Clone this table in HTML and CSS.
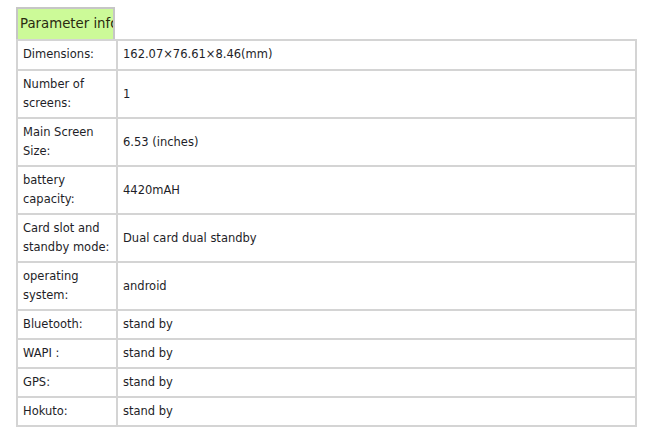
FILE: index.html
```html
<!DOCTYPE html>
<html>
<head>
<meta charset="utf-8">
<link rel="stylesheet" href="styles.css">
</head>
<body>
<div class="page">
  <div class="tab">Parameter info</div>
  <table class="params">
    <colgroup><col class="c-label"><col></colgroup>
    <tr class="first"><td>Dimensions:</td><td>162.07×76.61×8.46(mm)</td></tr>
    <tr><td>Number of screens:</td><td>1</td></tr>
    <tr><td>Main Screen Size:</td><td>6.53 (inches)</td></tr>
    <tr><td>battery capacity:</td><td>4420mAH</td></tr>
    <tr><td>Card slot and standby mode:</td><td>Dual card dual standby</td></tr>
    <tr><td>operating system:</td><td>android</td></tr>
    <tr><td>Bluetooth:</td><td>stand by</td></tr>
    <tr><td>WAPI :</td><td>stand by</td></tr>
    <tr><td>GPS:</td><td>stand by</td></tr>
    <tr><td>Hokuto:</td><td>stand by</td></tr>
  </table>
</div>
</body>
</html>
```
FILE: styles.css
```css
html, body {
  margin: 0;
  padding: 0;
  background: #ffffff;
}
body {
  font-family: "DejaVu Sans", Verdana, sans-serif;
  font-size: 11.5px;
  color: #1e1e28;
}
.page {
  padding: 7px 0 0 16px;
}
.tab {
  box-sizing: border-box;
  width: 99px;
  height: 32px;
  border: 2px solid #c6c6c6;
  border-bottom: none;
  background: #ccfa98;
  font-size: 13.3px;
  line-height: 30px;
  padding-left: 2px;
  white-space: nowrap;
  overflow: hidden;
  color: #2a2a10;
}
.params {
  border-collapse: collapse;
  table-layout: fixed;
  width: 621px;
  border: 2px solid #d4d4d4;
}
.c-label {
  width: 100px;
}
.params td {
  border: 2px solid #d4d4d4;
  padding: 4px 1px 4px 5px;
  line-height: 19px;
  vertical-align: middle;
  text-align: left;
}
.params td + td {
  padding-left: 5px;
}
.params tr.first td {
  padding-top: 4px;
  padding-bottom: 5px;
}
```
